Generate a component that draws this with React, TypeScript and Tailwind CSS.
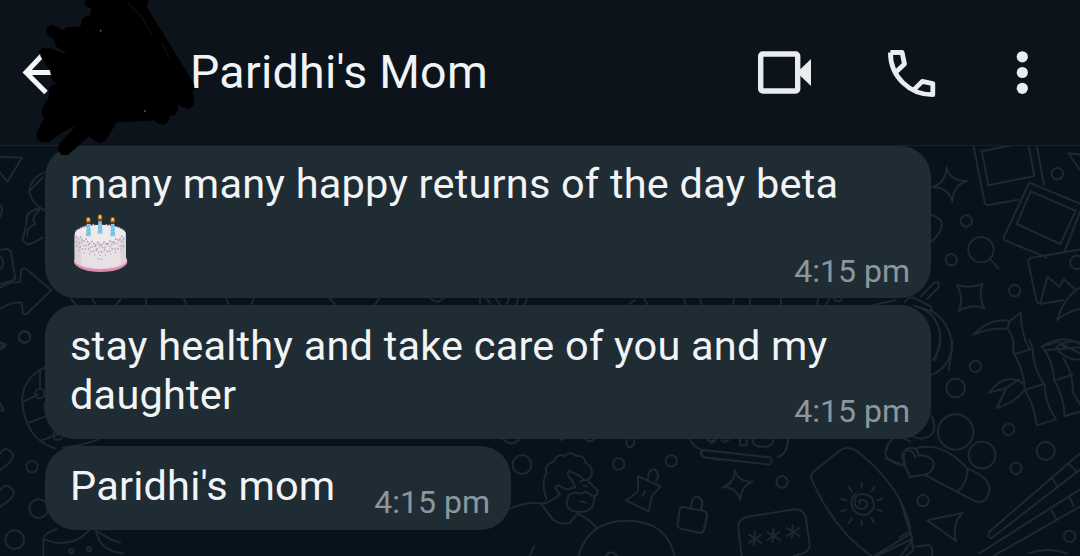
import type { ReactNode } from "react";

function Wallpaper() {
  return (
    <svg
      className="absolute inset-0 h-[556px] w-[1080px]"
      viewBox="0 0 1080 556"
      fill="none"
      stroke="#1d2931"
      strokeLinecap="round"
      strokeLinejoin="round"
    >
      {/* photos, magnifier, sparkles */}
      <g transform="translate(900 140) scale(.33333)" strokeWidth="6">
        <path d="M220 15 254 188q3 8 11 7l90-16M245 30l20 106 138-28-17-90M245 34l95-19M410 15l22 120" />
        <path d="M388 128 312 290q-3 8 5 12l122 50M388 128l160 66M392 154 350 252l131 60 46-100zM540 215l-46 120" />
        <path d="M545 328 395 353q-12 3-10 15l24 112q3 12 16 11l65-10M422 486l20-76 36 30 14-22 32 30" />
        <circle cx="530" cy="367" r="20" />
        <path d="M545 440q-50 25-74 100 30-25 74-35" />
        <path d="M140 82q8 40 60 41-42 14-43 63-10-45-60-44 40-14 43-60z" />
        <path d="M171 435q40 12 77-4-15 38 5 74-35-16-77 8 17-40-5-78z" />
        <circle cx="199" cy="243" r="17" />
        <circle cx="154" cy="359" r="17" />
        <circle cx="344" cy="452" r="17" />
        <circle cx="472" cy="101" r="17" />
        <circle cx="243" cy="329" r="38" />
        <path d="m272 358 23 27M505 40l35 50M505 40l45 5M95 225q62 20 0 80" />
        <path d="m62 470 38-40q20-12 16 12l-34 34M15 486q8-20 32-10l43 22q12 10 0 14l-50-16M50 500q70 20 71 100l-15 60M90 510q65 35 66 120l-10 60" />
        <path d="M220 584q55-54 108-40l-6 22q-50-4-102 18zM328 544l34-26q2 70 28 112M322 566q20 20 18 64M425 620q60-40 115-8M440 630l100-8M475 606l25 20" />
      </g>
      {/* bamboo, pill, chopsticks */}
      <g transform="translate(900 340) scale(.33333)" strokeWidth="6">
        <path d="M340 0v38q32 50 34 112 28 40 36 106l58-18q-34-50-34-104-36-50-36-108L388 0M346 42l52-16M374 150l58-18" />
        <path d="M372 132q-54-40-105 26l52-14-28 60q60-20 82-54M316 145l40-26" />
        <path d="m426 20 50-16M426 20q34 40 36 100 30 50 32 108l50-14M462 122l56-18M490 55q32 50 28 102l26 42M540 8q-50-12-72 16 34 40 72 34M490 15l50 25" />
        <circle cx="226" cy="79" r="17" />
        <circle cx="167" cy="144" r="28" />
        <circle cx="326" cy="268" r="17" />
        <circle cx="437" cy="333" r="27" />
        <circle cx="348" cy="385" r="17" />
        <circle cx="69" cy="482" r="17" />
        <circle cx="509" cy="589" r="17" />
        <circle cx="167" cy="276" r="53" />
        <circle cx="246" cy="345" r="40" />
        <path d="M95 228q26 60-30 68-25-2-36-16M157 0q0 80-62 104M122 0q-2 30-24 60" />
        <path d="M30 411q-40-86 4-88 18 0 22 24 30-2 44 16 6 26-20 40zM50 324q80-20 152 62 80 30 64 76-10 30-40 22L75 405M202 386q2 40-26 66M-40 330q10-60 70-25M8 375l-50-20" />
        <path d="m82 541 106-22q-34 34-20 84zM540 340 268 575q-8 16 6 20l266-206M510 374l20 22M458 416l14 24M540 448 238 640M540 500 280 648M508 470l14 28M455 512l14 26" />
        <path d="m0 480 38 120-38 50M0 592l24-16M38 620l50-5q12 8 8 35M385 640q60-20 115 0" />
      </g>
      {/* portrait, clip, padlock */}
      <g transform="translate(500 430) scale(.33333)" strokeWidth="6">
        <path d="M140 208q-18-50 0-78-10-24 22-36 10-26 32-16 20-16 32 0 28-4 30 20 26 14 18 40-14 24-34 0l-34-16q-8 14 10 28l10 22-22 6-18-6q-12-12-20 2l14 20-34 22-22 6 34 46q30 20 52 10l18-22" />
        <path d="M240 155q20-12 30 5l22 20q6 20-16 18-20-20-30-6-24-8-38 2-20 40 14 50 40 8 56-16l8-34M242 214l18 4M250 166l12 4M126 220q-50-6-96 16M230 250q35 15 64 46M235 378q30-106 145-106 120 0 144 106M90 376l12-28M318 376q14-18 32 0" />
        <circle cx="66" cy="104" r="28" />
        <circle cx="356" cy="102" r="17" />
        <circle cx="514" cy="93" r="17" />
        <path d="M10 28q25 24 50 0M257 28q12 12 25 0M380 28q-4 22 10 24 14-2 14-24" />
        <path d="m414 138 68 32-26 26-10 48-68-32 36-28zM444 146q0-28 20-28 18 12 4 36M434 184l-6 14" />
        <path d="m548 231 64 12q10 3 9 12l-10 44q-3 11-14 9l-54-12q-12-4-10-14l6-42q2-9 9-9zM574 232q0-34 20-32 20 8 10 38M570 28q12 24 32 30M604 60l60 6M604 60q-4 20 8 22l50 8M625 28l10 8 10-8" />
      </g>
      {/* laptop, password card, lotion tube */}
      <g transform="translate(700 430) scale(.33333)" strokeWidth="6">
        <path d="M10 60 210 82q12 12-2 22L12 82q-12-12-2-22zM264 28q0 42-32 54M25 30q10 16 22 0M64 30q8 10 22 0M120 28v18h20V28M158 28q0 20 20 22h25q15-4 17-22" />
        <path d="M105 121q8 35 53 34-36 14-38 56-10-42-53-39 36-12 38-51z" />
        <circle cx="246" cy="156" r="17" />
        <path d="m145 260 138-22q34 0 36 36l10 70q0 22-28 28l-20 6M145 260q-32 6-30 34l10 84" />
        <path d="m164 306-2 38M147 314l36 24M147 338l34-22M220 298l-2 38M202 306l38 24M202 330l36-24M278 286l-2 38M260 294l38 24M260 318l38-24" />
        <path d="m340 125 80-64q20-14 48 0 150 120 164 250l-114 70Q400 300 334 145q-2-10 6-20zM530 378l104-50 6 34-24 16" />
        <path d="M481 222q-9-12 4-13 20 2 15 20-17 17-34-1-9-33 22-37 40 5 32 45-25 36-60 4-16-30 8-50" />
        <path d="M485 160v14M447 172l8 12M523 172l-8 12M424 207l14 4M546 207l-14 4M424 244l14-5M546 244l-14-5M447 278l8-12M523 278l-8-12M485 286v-14" />
        <path d="M575 28q-50 60 32 78M632 142q-44-74-12-82 20 0 26 22M0 205q12 12 2 28l20 20q-6 55-20 56" />
      </g>
      {/* left margin */}
      <g transform="translate(0 140) scale(.33333)" strokeWidth="6">
        <path d="m0 50 66 3-44 72L0 98M0 195q12 12 0 36M132 98q-44 20-44 60 10 36 44 52M92 150l36-38M118 205q-45 10-38 44l-12 50q8 20 30 10l30-16M118 210q-30 30-10 42-30 10-26 36M0 330q30-10 34 10l12 78q-16 6-46 14M0 348q20 22 0 40M0 444q20-18 60-18l4-36q8-10 18 0l72 60-72 70q-12 8-14-4l-2-28q-36-4-66 20M0 605l18 10-18 6" />
        <circle cx="74" cy="590" r="17" />
      </g>
      <g transform="translate(0 340) scale(.33333)" strokeWidth="6">
        <path d="M140 80q-70 30-74 100 10 120 100 145M120 90v52M70 185l44-22M82 250l52-20M124 302l46-18M134 190q0 60 44 96M0 8l16 12-16 8M0 190l12 22H0M0 340q20-28 40 6 0 18-40 44M0 450q20-28 42 6 0 18-42 44" />
        <circle cx="119" cy="161" r="14" />
        <circle cx="174" cy="286" r="14" />
        <circle cx="73" cy="-8" r="17" />
        <circle cx="96" cy="380" r="17" />
        <circle cx="116" cy="506" r="28" />
        <circle cx="44" cy="599" r="28" />
        <path d="M130 650v-50q0-20 40-32M132 598q60 24 110-5l28-24M288 572q10 60 80 68M288 572q45 30 72 36M190 322q50-4 105-24" />
        <circle cx="214" cy="634" r="6" />
        <circle cx="267" cy="628" r="6" />
      </g>
      {/* doodle ends showing between bubbles */}
      <path
        strokeWidth="2"
        d="m71 299 6 7M92 299l5 7M121 299l-6 7M146 299v7M184 299l3 7M226 299l4 7M254 299l-4 7M330 299l6 6M379 299l-5 7M431 299q6 5 12 0M480 299v7M487 299l5 7M496 299l5 7M509 299l-3 7M518 299l-2 7M527 299l-3 7M629 304l6-4M644 299l4 6M684 299l2 6M700 299l2 6M734 299l-1 6M750 299v6M781 299v6M818 299l-1 6M829 299l-3 6M834 299q5 5 8 0M874 305l22-5M560 440l8-3"
      />
    </svg>
  );
}

function Scribble() {
  return (
    <svg
      className="absolute left-0 top-0 h-[160px] w-[260px]"
      viewBox="0 0 780 480"
      fill="none"
      stroke="#000"
      strokeLinecap="round"
      strokeLinejoin="round"
    >
      <path
        fill="#000"
        strokeWidth="2"
        d="M256 0 258 18 275 26 270 48 254 52 246 60 242 82 200 82 188 92 172 82 158 75 144 80 139 94 144 106 165 120 168 138 180 148 202 155 190 160 150 146 128 144 118 154 124 172 150 210 158 240 166 248 182 252 160 254 150 262 146 295 128 325 126 345 134 354 112 395 111 414 124 426 150 424 180 400 232 374 180 430 173 448 184 464 204 464 268 407 284 422 302 428 318 418 350 366 462 360 474 370 490 374 506 362 510 346 526 344 534 330 532 308 548 322 568 326 581 312 580 290 576 278 583 268 580 250 440 22 444 0z"
      />
      <path d="m382 8 40 38 34 56M486 130l20 42" stroke="#10100e" strokeWidth="4" />
      <circle cx="302" cy="92" r="3" fill="#555744" stroke="none" />
      <circle cx="435" cy="333" r="3" fill="#44545a" stroke="none" />
    </svg>
  );
}

function Cake() {
  return (
    <svg className="mt-[6px] ml-[3px] h-[60px] w-[56px]" viewBox="98 42 168 180">
      <ellipse cx="181" cy="185" rx="80" ry="31" fill="#d98aad" />
      <ellipse cx="181" cy="180" rx="79" ry="28" fill="#f3c3d6" />
      <path d="M103 105v70q10 28 78 30 66-2 76-30v-70z" fill="#e6e1e3" />
      <path d="M103 105v70q6 14 20 20v-80zM257 105v70q-4 12-16 18v-76z" fill="#d9d2d7" />
      <ellipse cx="180" cy="102" rx="77" ry="28" fill="#efe9ec" />
      <path d="M106 94q20-18 60-21M196 74q36 4 56 18" stroke="#d8bad2" strokeWidth="4" strokeDasharray="4 4" fill="none" />
      <g fill="none" strokeWidth="4">
        <path d="m106 108 8 8 6-5 9 14 8-8 10 14 8-7 10 12 8-9 9 10 10-11 8 8 10-12 9 7 8-13 9 5 8-12 8 4" stroke="#a293c5" strokeDasharray="5 4" />
        <path d="m106 124 9 6 8-4 10 14 9-8 10 13 10-9 10 10 9-8 10 8 10-12 9 6 9-12 9 5 8-12 8 4 8-10" stroke="#d29bb9" strokeDasharray="5 5" />
        <path d="m108 137 12 4 10 8 12-4 12 12 13-8 12 10 14-10 12 8 12-12 12 4 12-12 12 2" stroke="#8d96c4" strokeDasharray="4 6" />
        <path d="M116 150q30 16 64 16t62-18" stroke="#c995bd" strokeDasharray="3 13" />
      </g>
      <path d="m173 174 4 5M182 180l3-3" stroke="#9b9bd0" strokeWidth="3" />
      {[
        [144, 60],
        [179, 52],
        [217, 60],
      ].map(([x, y]) => (
        <g key={x} transform={`translate(${x} ${y})`}>
          <path d="M-5 12H5l3 37H-7z" fill="#82cce7" />
          <path d="m-5 22 10-6M-5 33l11-7M-5 44l12-8" stroke="#4aa3ce" strokeWidth="2" />
          <ellipse cy="1" rx="7" ry="10" fill="#a65a18" />
          <ellipse cy="-1" rx="4" ry="6" fill="#f5c957" />
          <path d="M0 4v7" stroke="#50321d" strokeWidth="3" />
        </g>
      ))}
    </svg>
  );
}

function Bubble({ box, children }: { box: string; children: ReactNode }) {
  return (
    <article className={`flex justify-between rounded-[31px] bg-[#202c33] pl-[25px] ${box}`}>
      {children}
    </article>
  );
}

function Time({ pad }: { pad: string }) {
  return (
    <time className={`mr-[21px] shrink-0 self-end text-[32px] leading-[38px] text-[#8b979e] ${pad}`}>
      4:15 pm
    </time>
  );
}

export default function App() {
  return (
    <div className="relative h-[556px] w-[1080px] overflow-hidden bg-[#07121a] font-['Roboto',sans-serif] text-[#f1f4f6]">
      <Wallpaper />
      <div className="relative flex h-full flex-col">
        <header className="flex h-[146px] shrink-0 items-center border-b border-[#152028] bg-[#0c131a] pt-px">
          <svg className="ml-[20px] h-[48px] w-[44px]" viewBox="0 0 44 48" fill="none" stroke="#f4f6f7" strokeWidth="5">
            <path d="M22.5 6 6 23.500l20 20M6 23.500h34" />
          </svg>
          <h1 className="mb-[2px] ml-[126px] w-[564px] whitespace-nowrap text-[46.5px] leading-[54px] font-normal tracking-[0.28px]">
            Paridhi's Mom
          </h1>
          <svg className="h-[60px] w-[60px]" viewBox="754 43 60 60">
            <rect x="760.7" y="54" width="37" height="37" rx="2" fill="none" stroke="#e9edef" strokeWidth="5.4" />
            <path d="M800 69.500 811 59v27L800 75.500z" fill="#e9edef" />
          </svg>
          <svg className="mb-px ml-[72px] h-[52px] w-[52px]" viewBox="886 46 52 52" fill="none" stroke="#e9edef" strokeWidth="4.8" strokeLinejoin="round">
            <path d="M890.4 51.500h11.700l2.400 11.500-8 7.500M890.4 51.500c0 24 19 42.200 42.400 42.200V82.600l-10.500-2.200-8 8" />
          </svg>
          <svg className="ml-[74px] h-[50px] w-[20px]" viewBox="1012 48 20 50" fill="#e9edef">
            <circle cx="1022.3" cy="56.8" r="5.6" />
            <circle cx="1022.3" cy="72.5" r="5.6" />
            <circle cx="1022.3" cy="88.3" r="5.6" />
          </svg>
        </header>
        <main className="flex flex-col items-start gap-[7px] pl-[45px] text-[41.5px] leading-[49px] tracking-[0.2px]">
          <Bubble box="h-[152px] w-[886px] pt-[13px]">
            <div className="w-0 whitespace-nowrap">
              <p>many many happy returns of the day beta</p>
              <Cake />
            </div>
            <Time pad="mb-[8px] tracking-normal" />
          </Bubble>
          <Bubble box="h-[134px] w-[886px] pt-[16px]">
            <p className="w-0 whitespace-nowrap">
              stay healthy and take care of you and my
              <br />
              daughter
            </p>
            <Time pad="mb-[9px] tracking-normal" />
          </Bubble>
          <Bubble box="h-[84px] w-[466px] pt-[15px]">
            <p className="whitespace-nowrap">Paridhi's mom</p>
            <Time pad="mb-[9px] tracking-normal" />
          </Bubble>
        </main>
      </div>
      <Scribble />
    </div>
  );
}
